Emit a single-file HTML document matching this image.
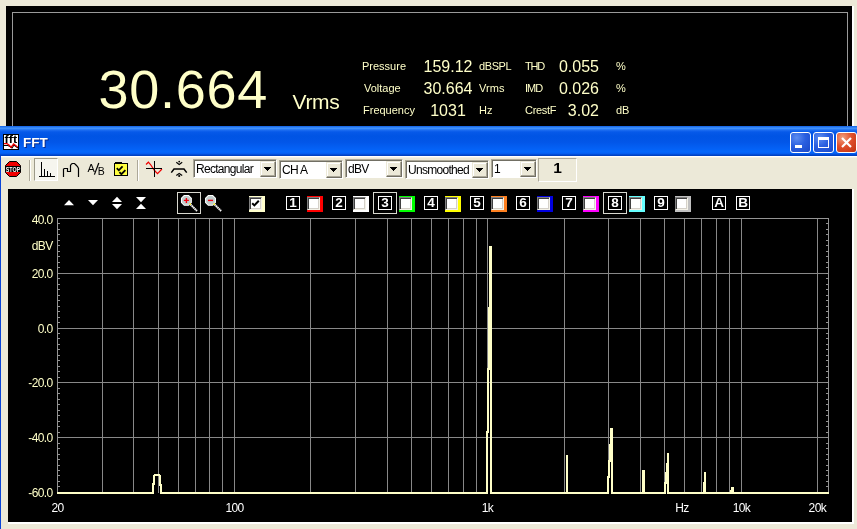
<!DOCTYPE html><html><head><meta charset="utf-8"><title>FFT</title><style>

html,body{margin:0;padding:0}
body{width:857px;height:529px;background:#ece9d8;position:relative;overflow:hidden;will-change:transform;font-family:"Liberation Sans",sans-serif}
.a{position:absolute}
.t{position:absolute;white-space:nowrap;line-height:1}
.py{color:#ffffc8}
.s11{font-size:11px}
.n16{font-size:16px;}
.dd{position:absolute;height:19px;background:#fff;box-sizing:border-box;border:1px solid;border-color:#aca899 #fff #fff #aca899;box-shadow:inset 1px 1px 0 #716f64}
.dd .tx{position:absolute;left:2px;top:3px;font-size:12px;line-height:12px;letter-spacing:-0.7px;color:#000;white-space:nowrap}
.dd .bt{position:absolute;right:0px;top:1px;width:16px;height:16px;background:#ece9d8;box-sizing:border-box;border:1px solid;border-color:#ece9d8 #716f64 #716f64 #ece9d8;box-shadow:inset -1px -1px 0 #aca899,inset 1px 1px 0 #fff}
.dd .bt svg{position:absolute;left:3px;top:5px}
.nb{position:absolute;top:196px;width:14px;height:14px;box-sizing:border-box;border:1px solid #fff;background:#000;color:#fff;font-weight:bold;font-size:13.5px;line-height:12px;text-align:center}
.cc{position:absolute;top:196px;width:16px;height:16px}
.cb{position:absolute;left:0;top:1px;width:13px;height:13px;box-sizing:border-box;background:#fff;border:1px solid;border-color:#808080 #f4f2e8 #f4f2e8 #808080;box-shadow:inset 1px 1px 0 #404040,inset -1px -1px 0 #d4d0c8}
.fr{position:absolute;top:192px;width:24px;height:22px;box-sizing:border-box;border:1px solid #d8d8d0}
.yl{position:absolute;left:0;width:52.6px;text-align:right;font-size:12px;line-height:12px;letter-spacing:-0.6px;color:#ffffc8;white-space:nowrap}
.xl{position:absolute;top:502px;width:40px;text-align:center;font-size:12px;line-height:12px;letter-spacing:-0.6px;color:#fff;white-space:nowrap}

</style></head><body>
<div class="a" style="left:6px;top:6px;width:846px;height:121px;background:#000"></div>
<div class="a" style="left:852px;top:6px;width:2px;height:121px;background:#fff"></div>
<div class="a" style="left:12px;top:12px;width:836px;height:130px;box-sizing:border-box;border:1px solid #9a9a9a"></div>
<div class="t py" style="left:98.6px;top:62px;font-size:54px;line-height:54px;letter-spacing:0.7px">30.664</div>
<div class="t py" style="left:292.5px;top:91px;font-size:21px;line-height:21px;letter-spacing:-0.3px">Vrms</div>
<div class="t py s11" style="left:362px;top:61px">Pressure</div>
<div class="t py n16" style="left:398px;width:100px;text-align:center;top:58.5px">159.12</div>
<div class="t py s11" style="left:479px;top:61px;letter-spacing:-0.4px">dBSPL</div>
<div class="t py s11" style="left:525px;top:61px;letter-spacing:-1.2px">THD</div>
<div class="t py n16" style="left:499px;width:100px;text-align:right;top:58.5px">0.055</div>
<div class="t py s11" style="left:616px;top:61px">%</div>
<div class="t py s11" style="left:364px;top:83px">Voltage</div>
<div class="t py n16" style="left:398px;width:100px;text-align:center;top:80.5px">30.664</div>
<div class="t py s11" style="left:479px;top:83px;letter-spacing:0.1px">Vrms</div>
<div class="t py s11" style="left:525px;top:83px;letter-spacing:-1.0px">IMD</div>
<div class="t py n16" style="left:499px;width:100px;text-align:right;top:80.5px">0.026</div>
<div class="t py s11" style="left:616px;top:83px">%</div>
<div class="t py s11" style="left:363px;top:105px">Frequency</div>
<div class="t py n16" style="left:398px;width:100px;text-align:center;top:102.5px">1031</div>
<div class="t py s11" style="left:479px;top:105px;letter-spacing:0px">Hz</div>
<div class="t py s11" style="left:525px;top:105px;letter-spacing:-0.3px">CrestF</div>
<div class="t py n16" style="left:499px;width:100px;text-align:right;top:102.5px">3.02</div>
<div class="t py s11" style="left:616px;top:105px">dB</div>
<div class="a" style="left:0;top:126px;width:857px;height:403px;background:#ece9d8"></div>
<div class="a" style="left:0;top:126px;width:1px;height:403px;background:#0a45d8"></div>
<div class="a" id="tb" style="left:0;top:126px;width:857px;height:30px;background:linear-gradient(180deg,#0a5ce4 0,#2c7cf2 1px,#3f90fb 2.5px,#1d6ef1 4px,#0659e9 6px,#0054e4 10px,#0256e8 16px,#0460f4 22px,#0467fc 26px,#045df0 27.5px,#0046cc 29px,#003cb8 30px)"></div>
<svg class="a" style="left:3px;top:134px" width="16" height="16" viewBox="0 0 16 16"><rect x="0" y="0" width="16" height="16" fill="#000"/><rect x="1" y="1" width="14" height="14" fill="#fff"/><text x="1.6" y="8.6" font-family="Liberation Sans,sans-serif" font-weight="bold" font-size="10" fill="#000" textLength="12.6" lengthAdjust="spacingAndGlyphs">fft</text><polyline points="1,11.5 5,11.5 7,12.5 9,14 11,11 13,12.5 15,14" fill="none" stroke="#000" stroke-width="1.1"/><polyline points="1,9.6 4,9.6 6,11 8,13.2 9.5,11.5 10.5,10 12,11 14.5,13" fill="none" stroke="#f00000" stroke-width="1.3"/></svg>
<div class="t" style="left:23px;top:135px;font-size:13.5px;line-height:16px;font-weight:bold;color:#fff;text-shadow:1px 1px 0 #0a2a8a">FFT</div>
<div class="a" style="left:790px;top:132px;width:21px;height:21px;box-sizing:border-box;border:1px solid #fff;border-radius:3px;background:radial-gradient(circle at 30% 25%,#5d8df0 0,#2a5fe0 45%,#1a48c8 100%)"><div class="a" style="left:4px;top:12px;width:7px;height:3px;background:#fff"></div></div>
<div class="a" style="left:813px;top:132px;width:21px;height:21px;box-sizing:border-box;border:1px solid #fff;border-radius:3px;background:radial-gradient(circle at 30% 25%,#5d8df0 0,#2a5fe0 45%,#1a48c8 100%)"><div class="a" style="left:4px;top:4px;width:11px;height:11px;box-sizing:border-box;border:1px solid #fff;border-top:3px solid #fff"></div></div>
<div class="a" style="left:836px;top:132px;width:21px;height:21px;box-sizing:border-box;border:1px solid #fff;border-radius:3px;background:radial-gradient(circle at 30% 25%,#f0a080 0,#e0502c 45%,#c03010 100%)"><svg class="a" style="left:0;top:0" width="19" height="19"><path d="M5,5 L14,14 M14,5 L5,14" stroke="#fff" stroke-width="2.2" fill="none"/></svg></div>
<div class="a" style="left:1px;top:156px;width:856px;height:1px;background:#fff"></div><div class="a" style="left:1px;top:157px;width:856px;height:1px;background:#f3f1e6"></div>
<svg class="a" style="left:5px;top:161px" width="16" height="16" viewBox="0 0 16 16"><polygon points="4.5,0.5 11.5,0.5 15.5,4.5 15.5,11.5 11.5,15.5 4.5,15.5 0.5,11.5 0.5,4.5" fill="#f00000" stroke="#000" stroke-width="1"/><rect x="0.5" y="5" width="15" height="6" fill="#000"/><text x="8" y="10.5" text-anchor="middle" font-family="Liberation Sans,sans-serif" font-weight="bold" font-size="7" fill="#fff" textLength="14.4" lengthAdjust="spacingAndGlyphs">STOP</text></svg>
<div class="a" style="left:29px;top:160px;width:1px;height:21px;background:#aca899"></div><div class="a" style="left:30px;top:160px;width:1px;height:21px;background:#fff"></div>
<div class="a" style="left:34px;top:158px;width:24px;height:23px;box-sizing:border-box;background:#f6f5ee;border:1px solid;border-color:#9d9a8a #fff #fff #9d9a8a"></div>
<svg class="a" style="left:34px;top:158px" width="24" height="23" viewBox="34 158 24 23" shape-rendering="crispEdges"><path d="M41.5,162 V176 M44.5,169 V176 M47.5,171 V176 M50.5,173 V176 M39,176.5 H55" stroke="#000" stroke-width="1" fill="none"/></svg>
<svg class="a" style="left:60px;top:160px" width="22" height="20" viewBox="60 160 22 20"><path d="M63.5,177 V169 L64.5,168.5 H67.5 V171.5 H70.5 V165.5 L71.5,164 L72.5,163.5 H74.5 L76,165 L77.5,166.5 L78.5,168.5 V177" stroke="#000" stroke-width="1.2" fill="none"/></svg>
<svg class="a" style="left:86px;top:160px" width="22" height="20" viewBox="86 160 22 20"><text x="87.6" y="171.6" font-family="Liberation Sans,sans-serif" font-size="11" fill="#000">A</text><path d="M98.8,163 L94.4,174.6" stroke="#000" stroke-width="1.2"/><text x="97.8" y="174.6" font-family="Liberation Sans,sans-serif" font-size="10.5" fill="#000">B</text></svg>
<svg class="a" style="left:112px;top:160px" width="20" height="20" viewBox="112 160 20 20"><path d="M115.5,163.5 V162.5 H121.5 V163.5" stroke="#000" fill="#ffff30" shape-rendering="crispEdges"/><rect x="114.5" y="163.5" width="13" height="12" fill="#ffff40" stroke="#000" stroke-width="1" shape-rendering="crispEdges"/><path d="M116.8,168.2 L118.8,170.3 L122.6,166.4 M119.4,172.2 L121.4,174.2 L125.4,170.2" stroke="#000" stroke-width="1.8" fill="none"/></svg>
<div class="a" style="left:137px;top:160px;width:1px;height:21px;background:#aca899"></div><div class="a" style="left:138px;top:160px;width:1px;height:21px;background:#fff"></div>
<svg class="a" style="left:144px;top:159px" width="20" height="20" viewBox="144 159 20 20"><path d="M146,164.5 L148.4,162.2 L150.5,164.5 L154.5,170.5 L157.5,173.6 L162,169" stroke="#f00000" stroke-width="1.2" fill="none"/><path d="M154.5,161 V177 M146,168.5 H162" stroke="#000" stroke-width="1" fill="none" shape-rendering="crispEdges"/></svg>
<svg class="a" style="left:169px;top:159px" width="20" height="20" viewBox="169 159 20 20"><path d="M171.3,172.6 L174,169 H184 L186.7,172.6" stroke="#000" stroke-width="1.5" fill="none"/><path d="M176.3,162.3 L179.2,164.4 L182.2,162.3 M176.3,175.4 L179.2,173.4 L182.2,175.4" stroke="#000" stroke-width="1.2" fill="none"/><circle cx="179.2" cy="161.6" r="0.9" fill="#000"/><circle cx="179.2" cy="176" r="1.1" fill="#000"/></svg>
<div class="dd" style="left:193px;top:159px;width:84px"><span class="tx">Rectangular</span><span class="bt"><svg width="7" height="4" shape-rendering="crispEdges"><path d="M0,0h7v1h-7z M1,1h5v1h-5z M2,2h3v1h-3z M3,3h1v1h-1z" fill="#000"/></svg></span></div>
<div class="dd" style="left:279px;top:160px;width:64px"><span class="tx">CH A</span><span class="bt"><svg width="7" height="4" shape-rendering="crispEdges"><path d="M0,0h7v1h-7z M1,1h5v1h-5z M2,2h3v1h-3z M3,3h1v1h-1z" fill="#000"/></svg></span></div>
<div class="dd" style="left:345px;top:159px;width:58px"><span class="tx">dBV</span><span class="bt"><svg width="7" height="4" shape-rendering="crispEdges"><path d="M0,0h7v1h-7z M1,1h5v1h-5z M2,2h3v1h-3z M3,3h1v1h-1z" fill="#000"/></svg></span></div>
<div class="dd" style="left:405px;top:160px;width:84px"><span class="tx">Unsmoothed</span><span class="bt"><svg width="7" height="4" shape-rendering="crispEdges"><path d="M0,0h7v1h-7z M1,1h5v1h-5z M2,2h3v1h-3z M3,3h1v1h-1z" fill="#000"/></svg></span></div>
<div class="dd" style="left:491px;top:159px;width:46px"><span class="tx">1</span><span class="bt"><svg width="7" height="4" shape-rendering="crispEdges"><path d="M0,0h7v1h-7z M1,1h5v1h-5z M2,2h3v1h-3z M3,3h1v1h-1z" fill="#000"/></svg></span></div>
<div class="a" style="left:538px;top:158px;width:39px;height:24px;box-sizing:border-box;border:1px solid;border-color:#aca899 #fff #fff #aca899;text-align:center;font-weight:bold;font-size:15.5px;line-height:18px;color:#000;padding-top:0px">1</div>
<div class="a" style="left:8px;top:189px;width:844px;height:333px;background:#000"></div>
<div class="a" style="left:852px;top:189px;width:2px;height:335px;background:#fff"></div>
<div class="a" style="left:8px;top:522px;width:846px;height:2px;background:#fff"></div>
<svg class="a" style="left:60px;top:192px" width="100" height="22" viewBox="60 192 100 22"><g fill="#fff"><polygon points="64,205.3 74,205.3 69,200"/><polygon points="88,200 98,200 93,205.3"/><polygon points="112,202 122,202 117,196.8"/><polygon points="112,204 122,204 117,209.2"/><polygon points="136,197 146,197 141,202.2"/><polygon points="136,209 146,209 141,203.8"/></g></svg>
<div class="fr" style="left:177px"></div>
<svg class="a" style="left:178px;top:192px" width="48" height="22" viewBox="178 192 48 22"><g><polygon points="184.20000000000002,195.5 188.6,195.5 191.3,198.20000000000002 191.3,202.6 188.6,205.3 184.20000000000002,205.3 181.5,202.6 181.5,198.20000000000002" fill="#c0cccc" stroke="#fff" stroke-width="1.1"/><path d="M190.4,204.4 L197.0,211.0" stroke="#f4f4f4" stroke-width="2" stroke-dasharray="1.6 0.4"/><rect x="189.4" y="203.4" width="1.5" height="1.5" fill="#ffee00"/><path d="M183.9,200.4 H188.9 M186.4,197.9 V202.9" stroke="#f00010" stroke-width="1.4"/></g><g><polygon points="208.3,195.5 212.7,195.5 215.4,198.20000000000002 215.4,202.6 212.7,205.3 208.3,205.3 205.6,202.6 205.6,198.20000000000002" fill="#c0cccc" stroke="#fff" stroke-width="1.1"/><path d="M214.5,204.4 L221.1,211.0" stroke="#f4f4f4" stroke-width="2" stroke-dasharray="1.6 0.4"/><rect x="213.5" y="203.4" width="1.5" height="1.5" fill="#ffee00"/><path d="M208.0,200.4 H213.0" stroke="#f00010" stroke-width="1.4"/></g></svg>
<div class="cc" style="left:249px;background:#ffffcc"><div class="cb"></div><svg class="a" style="left:0;top:1px" width="13" height="13"><path d="M3.2,6.2 L5.4,8.4 L9.8,3.8" stroke="#000" stroke-width="2" fill="none"/></svg></div>
<div class="nb" style="left:286px">1</div>
<div class="cc" style="left:307px;background:#ff0000"><div class="cb"></div></div>
<div class="nb" style="left:332px">2</div>
<div class="cc" style="left:353px;background:#ffffff"><div class="cb"></div></div>
<div class="fr" style="left:373px"></div>
<div class="nb" style="left:378px">3</div>
<div class="cc" style="left:399px;background:#00ff00"><div class="cb"></div></div>
<div class="nb" style="left:424px">4</div>
<div class="cc" style="left:445px;background:#ffff00"><div class="cb"></div></div>
<div class="nb" style="left:470px">5</div>
<div class="cc" style="left:491px;background:#ff8020"><div class="cb"></div></div>
<div class="nb" style="left:516px">6</div>
<div class="cc" style="left:537px;background:#0000e0"><div class="cb"></div></div>
<div class="nb" style="left:562px">7</div>
<div class="cc" style="left:583px;background:#ff00ff"><div class="cb"></div></div>
<div class="fr" style="left:603px"></div>
<div class="nb" style="left:608px">8</div>
<div class="cc" style="left:629px;background:#66ffff"><div class="cb"></div></div>
<div class="nb" style="left:654px">9</div>
<div class="cc" style="left:675px;background:#c0c0c0"><div class="cb"></div></div>
<div class="nb" style="left:712px">A</div><div class="nb" style="left:736px">B</div>
<svg class="a" style="left:8px;top:214px" width="844" height="284" viewBox="8 214 844 284" shape-rendering="crispEdges"><path d="M102.5,218 V493 M133.5,218 V493 M158.5,218 V493 M178.5,218 V493 M195.5,218 V493 M209.5,218 V493 M222.5,218 V493 M234.5,218 V493 M310.5,218 V493 M355.5,218 V493 M387.5,218 V493 M411.5,218 V493 M431.5,218 V493 M448.5,218 V493 M463.5,218 V493 M476.5,218 V493 M487.5,218 V493 M564.5,218 V493 M608.5,218 V493 M640.5,218 V493 M664.5,218 V493 M684.5,218 V493 M701.5,218 V493 M716.5,218 V493 M729.5,218 V493 M741.5,218 V493 M817.5,218 V493 M57,273.5 H829 M57,328.5 H829 M57,382.5 H829 M57,437.5 H829 " stroke="#888888" stroke-width="1" fill="none"/><path d="M57.5,218 V493 M828.5,218 V493 M57,218.5 H829 M57,223.5 H60 M826,223.5 H829 M57,229.5 H60 M826,229.5 H829 M57,234.5 H60 M826,234.5 H829 M57,240.5 H60 M826,240.5 H829 M57,245.5 H60 M826,245.5 H829 M57,251.5 H60 M826,251.5 H829 M57,256.5 H60 M826,256.5 H829 M57,262.5 H60 M826,262.5 H829 M57,267.5 H60 M826,267.5 H829 M57,273.5 H60 M826,273.5 H829 M57,278.5 H60 M826,278.5 H829 M57,284.5 H60 M826,284.5 H829 M57,289.5 H60 M826,289.5 H829 M57,295.5 H60 M826,295.5 H829 M57,300.5 H60 M826,300.5 H829 M57,306.5 H60 M826,306.5 H829 M57,311.5 H60 M826,311.5 H829 M57,317.5 H60 M826,317.5 H829 M57,322.5 H60 M826,322.5 H829 M57,328.5 H60 M826,328.5 H829 M57,333.5 H60 M826,333.5 H829 M57,338.5 H60 M826,338.5 H829 M57,344.5 H60 M826,344.5 H829 M57,349.5 H60 M826,349.5 H829 M57,355.5 H60 M826,355.5 H829 M57,360.5 H60 M826,360.5 H829 M57,366.5 H60 M826,366.5 H829 M57,371.5 H60 M826,371.5 H829 M57,377.5 H60 M826,377.5 H829 M57,382.5 H60 M826,382.5 H829 M57,388.5 H60 M826,388.5 H829 M57,393.5 H60 M826,393.5 H829 M57,399.5 H60 M826,399.5 H829 M57,404.5 H60 M826,404.5 H829 M57,410.5 H60 M826,410.5 H829 M57,415.5 H60 M826,415.5 H829 M57,421.5 H60 M826,421.5 H829 M57,426.5 H60 M826,426.5 H829 M57,432.5 H60 M826,432.5 H829 M57,437.5 H60 M826,437.5 H829 M57,443.5 H60 M826,443.5 H829 M57,448.5 H60 M826,448.5 H829 M57,454.5 H60 M826,454.5 H829 M57,459.5 H60 M826,459.5 H829 M57,465.5 H60 M826,465.5 H829 M57,470.5 H60 M826,470.5 H829 M57,475.5 H60 M826,475.5 H829 M57,481.5 H60 M826,481.5 H829 M57,486.5 H60 M826,486.5 H829 " stroke="#949494" stroke-width="1" fill="none"/><polyline points="57,493 153,493 153,484 154,484 154,476 155,475 159,475 160,476 160,485 161,485 161,493 487,493 487,432 488,432 488,369 489,369 489,308 490,308 490,247 491,247 491,493 567,493 567,455 567,493 608,493 608,477 609,477 609,461 610,461 610,445 611,445 611,429 612,429 612,493 643,493 643,471 644,471 644,493 665,493 665,483 666,483 666,473 667,473 667,464 668,464 668,453 668,493 704,493 704,483 705,483 705,472 705,493 731,493 731,491 732,491 732,488 733,488 733,493 829,493" stroke="#ffffc8" stroke-width="2" fill="none" stroke-linejoin="miter" stroke-linecap="butt"/></svg>
<div class="yl" style="top:214px">40.0</div>
<div class="yl" style="top:268px">20.0</div>
<div class="yl" style="top:323px">0.0</div>
<div class="yl" style="top:377px">-20.0</div>
<div class="yl" style="top:432px">-40.0</div>
<div class="yl" style="top:487px">-60.0</div>
<div class="yl" style="top:240px">dBV</div>
<div class="xl" style="left:37.5px">20</div>
<div class="xl" style="left:214.6px">100</div>
<div class="xl" style="left:467.4px">1k</div>
<div class="xl" style="left:662px">Hz</div>
<div class="xl" style="left:721.5px">10k</div>
<div class="xl" style="left:797.4px">20k</div>
</body></html>
